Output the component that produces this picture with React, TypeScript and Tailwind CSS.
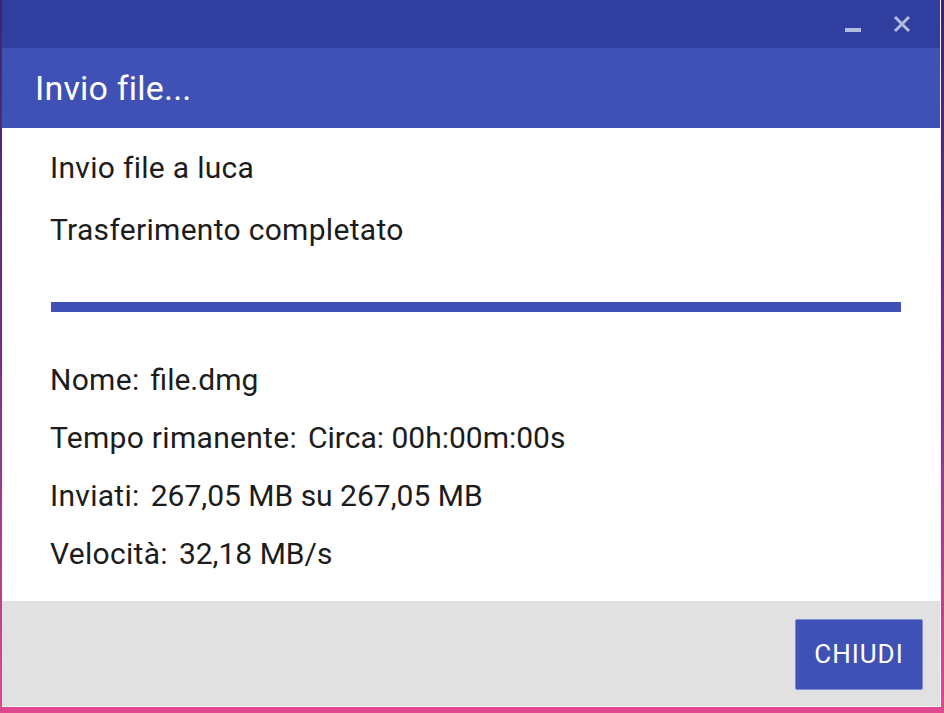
export default function App() {
  const details: [string, string][] = [
    ['Nome:', 'file.dmg'],
    ['Tempo rimanente:', 'Circa: 00h:00m:00s'],
    ['Inviati:', '267,05 MB su 267,05 MB'],
    ['Velocità:', '32,18 MB/s'],
  ];

  return (
    <div
      className="w-[944px] h-[713px] bg-gradient-to-b from-[#3a2470] via-[#7a2c86] to-[#e0488f] pl-[2px] pr-[3px] pb-[6px]"
      style={{ fontFamily: 'Roboto, "Noto Sans", sans-serif' }}
    >
      <div className="flex flex-col h-full border-r border-b border-[#f2f2f2]">
        {/* title bar */}
        <div className="h-[48px] shrink-0 bg-[#303f9f] flex items-center justify-end pr-[29px] gap-[32px]">
          <div className="w-[16px] h-[4px] bg-[#b3bbe2] mt-[12px]" />
          <svg width="18" height="18" viewBox="0 0 18 18" className="mb-[1px]">
            <path d="M2 2 L16 16 M16 2 L2 16" stroke="#b3bbe2" strokeWidth="3" />
          </svg>
        </div>

        {/* header */}
        <div className="h-[80px] shrink-0 bg-[#3f51b5] flex items-center pl-[33px]">
          <span className="text-white text-[34px] leading-none tracking-[0.2px]">Invio file...</span>
        </div>

        {/* body */}
        <div className="flex-1 bg-white pl-[48px] pr-[39px] text-[#1c1c1c] text-[30px]">
          <div className="leading-[40px] mt-[20px] tracking-[0.3px]">Invio file a luca</div>
          <div className="leading-[40px] mt-[22px] tracking-[0.3px]">Trasferimento completato</div>
          <div className="h-[10px] bg-[#3f51b5] mt-[52px] ml-[1px]" />
          <div className="flex flex-col gap-[18px] mt-[48px]">
            {details.map(([label, value]) => (
              <div key={label} className="leading-[40px] flex gap-[11px]">
                <span className="tracking-[0.3px]">{label}</span>
                <span>{value}</span>
              </div>
            ))}
          </div>
        </div>

        {/* footer */}
        <div className="h-[105px] shrink-0 bg-[#e1e1e1] flex justify-end items-start pt-[18px] pr-[17px]">
          <button className="w-[128px] h-[71px] bg-[#3f51b5] border border-[#7f8cd0] rounded-[2px] text-white text-[26px] tracking-[1px]">
            CHIUDI
          </button>
        </div>
      </div>
    </div>
  );
}
